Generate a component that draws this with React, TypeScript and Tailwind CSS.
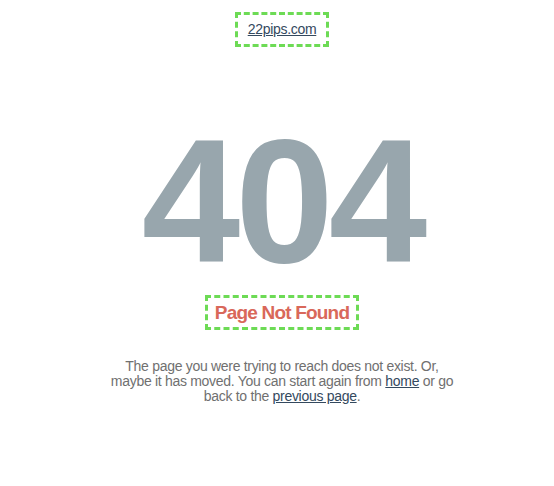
export default function App() {
  return (
    <main className="min-h-screen bg-white pl-[10px] font-['Liberation_Sans',Arial,sans-serif] flex flex-col items-center">
      <div className="mt-3 border-[3px] border-dashed border-[#6ddb55] px-[9.5px] py-[6px]">
        <a href="#" className="block text-[14px] leading-[17px] tracking-[-0.3px] text-[#34495e] underline">
          22pips.com
        </a>
      </div>
      <h1 className="mt-[66px] text-[177px] leading-[177px] font-bold text-[#98a6ad] tracking-[-5px]">
        404
      </h1>
      <div className="mt-[5px] border-[3px] border-dashed border-[#6ddb55] px-[7px] py-[2px]">
        <h2 className="text-[19px] leading-[25px] font-bold tracking-[-0.8px] text-[#d9685a]">Page Not Found</h2>
      </div>
      <p className="mt-[29px] w-[348px] text-center text-[14px] leading-[15px] tracking-[-0.3px] text-[#707070]">
        The page you were trying to reach does not exist. Or, maybe it has moved. You can start again from{" "}
        <a href="#" className="text-[#34495e] underline">home</a> or go back to the{" "}
        <a href="#" className="text-[#34495e] underline">previous page</a>.
      </p>
    </main>
  );
}
